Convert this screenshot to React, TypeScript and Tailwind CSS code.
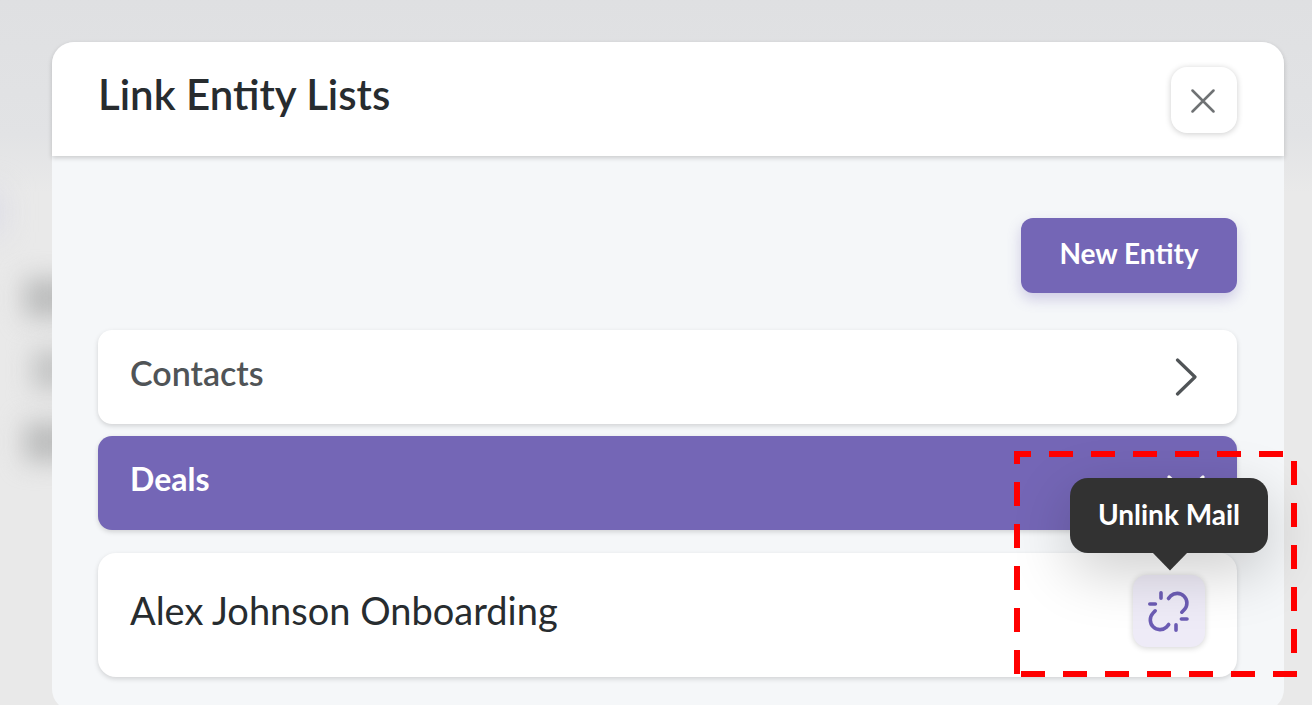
import React, { useState } from 'react';

interface Entity {
  id: number;
  name: string;
}

interface EntityGroup {
  id: number;
  label: string;
  items: Entity[];
}

const groups: EntityGroup[] = [
  { id: 1, label: 'Contacts', items: [] },
  { id: 2, label: 'Deals', items: [{ id: 21, name: 'Alex Johnson Onboarding' }] },
];

const CloseIcon = () => (
  <svg width="24" height="24" viewBox="0 0 24 24" fill="none" stroke="currentColor" strokeWidth="2.5" strokeLinecap="round">
    <path d="M1.5 1.5l21 21M22.5 1.5l-21 21" />
  </svg>
);

const ChevronRight = () => (
  <svg width="22" height="40" viewBox="0 0 22 40" fill="none" stroke="currentColor" strokeWidth="3.2" strokeLinecap="round" strokeLinejoin="round">
    <path d="M2.5 3L20 20L2.5 37" />
  </svg>
);

const ChevronDown = () => (
  <svg width="38" height="20" viewBox="0 0 38 20" fill="none" stroke="currentColor" strokeWidth="3.2" strokeLinecap="round" strokeLinejoin="round">
    <path d="M2 2L19 18.5L36 2" />
  </svg>
);

const UnlinkIcon = () => (
  <svg width="41" height="41" viewBox="0 0 41 41" fill="none" stroke="currentColor" strokeWidth="3.6" strokeLinecap="round" strokeLinejoin="round">
    <path d="M20.5 7.5L22.7 4.9A9.7 9.7 0 0 1 36.4 18.6L33.8 21.2" />
    <path d="M20.7 33.5L18.5 36.1A9.7 9.7 0 0 1 4.8 22.4L7.2 19.8" />
    <path d="M13 1.8v5.4M1.8 13h5.6M28 33.8v5.4M33.4 28h5.6" />
  </svg>
);

// red dashed frame that points out the unlink action
const Highlight = () => (
  <svg
    className="pointer-events-none absolute -right-[92px] -top-[124px] z-20"
    width="283"
    height="226"
    viewBox="0 0 283 226"
    fill="none"
    stroke="#ff0000"
    strokeWidth="6"
  >
    <path d="M0 3H17M35 3H283" strokeDasharray="24 18" />
    <path d="M280 10V202" strokeDasharray="24 18" />
    <path d="M7 223H283" strokeDasharray="24 18" />
    <path d="M3 0V13" />
    <path d="M3 31V223" strokeDasharray="24 18" />
  </svg>
);

const App: React.FC = () => {
  const [openId, setOpenId] = useState<number | null>(2);

  return (
    <div className="relative h-screen overflow-hidden bg-[#e9e9e9] pt-[42px] pr-7 pl-[52px] font-['Lato','Open_Sans',sans-serif]">
      {/* blurred page behind the dialog */}
      <div className="absolute inset-x-0 top-0 h-48 bg-linear-to-b from-[#dfe0e2] via-[#e2e3e5] via-70% to-[#e9e9e9]"></div>
      <div className="absolute -left-12 top-48 h-10 w-12 bg-[#d8d8e6] blur-lg"></div>
      <div className="absolute left-6 top-[278px] h-10 w-16 bg-[#bcbdbd] blur-md"></div>
      <div className="absolute left-8 top-[350px] h-10 w-16 bg-[#c4c5c5] blur-md"></div>
      <div className="absolute left-6 top-[422px] h-10 w-16 bg-[#bcbdbd] blur-md"></div>

      <div role="dialog" aria-labelledby="dialog-title" className="relative rounded-[22px] bg-[#f5f7f9]">
        <div className="flex h-[114px] items-center justify-between rounded-t-[22px] bg-white pt-0.5 pr-[47px] pl-[46px] shadow-[0_2px_5px_rgba(0,0,0,0.18)]">
          <h2 id="dialog-title" className="pb-3 text-[42px] leading-[48px] font-semibold text-[#272c2f]">
            Link Entity Lists
          </h2>
          <button
            aria-label="Close"
            className="flex size-[66px] items-center justify-center rounded-2xl bg-white pt-0.5 pr-0.5 text-[#6f7274] shadow-[0_1px_6px_rgba(0,0,0,0.2)]"
          >
            <CloseIcon />
          </button>
        </div>

        <div className="pt-[62px] pr-[47px] pb-[34px] pl-[46px]">
          <div className="flex justify-end">
            <button className="h-[75px] w-[216px] rounded-xl bg-[#7466b6] pb-1.5 text-[28px] leading-8 font-bold text-white shadow-[0_6px_14px_rgba(116,102,182,0.3)]">
              New Entity
            </button>
          </div>

          <div className="mt-[37px] flex flex-col gap-3">
            {groups.map((group) => (
              <div key={group.id}>
                <button
                  aria-expanded={openId === group.id}
                  onClick={() => setOpenId(openId === group.id ? null : group.id)}
                  className={`flex h-[94px] w-full items-center justify-between rounded-[14px] pr-10 pl-8 leading-10 shadow-[0_2px_5px_rgba(0,0,0,0.15)] ${
                    openId === group.id
                      ? 'bg-[#7466b6] text-[32px] font-bold text-white'
                      : 'bg-white text-[34px] font-semibold text-[#505457]'
                  }`}
                >
                  <span className="pb-2">{group.label}</span>
                  {openId === group.id ? <span className="-mr-2 pt-1"><ChevronDown /></span> : <ChevronRight />}
                </button>

                {openId === group.id &&
                  group.items.map((item) => (
                    <div
                      key={item.id}
                      className="mt-[23px] flex h-[124px] items-center justify-between rounded-[18px] bg-white pr-8 pb-2 pl-8 shadow-[0_2px_5px_rgba(0,0,0,0.15)]"
                    >
                      <span className="pb-0.5 text-[38px] leading-[44px] text-[#272c2f]">{item.name}</span>
                      <div className="relative">
                        <button
                          aria-label="Unlink Mail"
                          className="flex size-[72px] items-center justify-center rounded-[14px] bg-[#eeebf7] pr-0.5 text-[#6c5cb4] shadow-[0_1px_6px_rgba(0,0,0,0.18)]"
                        >
                          <UnlinkIcon />
                        </button>
                        <div
                          role="tooltip"
                          className="absolute -right-[63px] -top-[97px] z-10 flex h-[75px] w-[198px] items-center justify-center rounded-[18px] bg-[#323232] pb-1 text-[28px] leading-8 font-bold whitespace-nowrap text-white shadow-[0_18px_60px_rgba(0,0,0,0.2)]"
                        >
                          Unlink Mail
                          <svg className="absolute left-[82px] top-[74px]" width="36" height="19" viewBox="0 0 36 19" fill="#323232">
                            <path d="M0 0H36L18 18.5Z" />
                          </svg>
                        </div>
                        <Highlight />
                      </div>
                    </div>
                  ))}
              </div>
            ))}
          </div>
        </div>
      </div>
    </div>
  );
};

export default App;
